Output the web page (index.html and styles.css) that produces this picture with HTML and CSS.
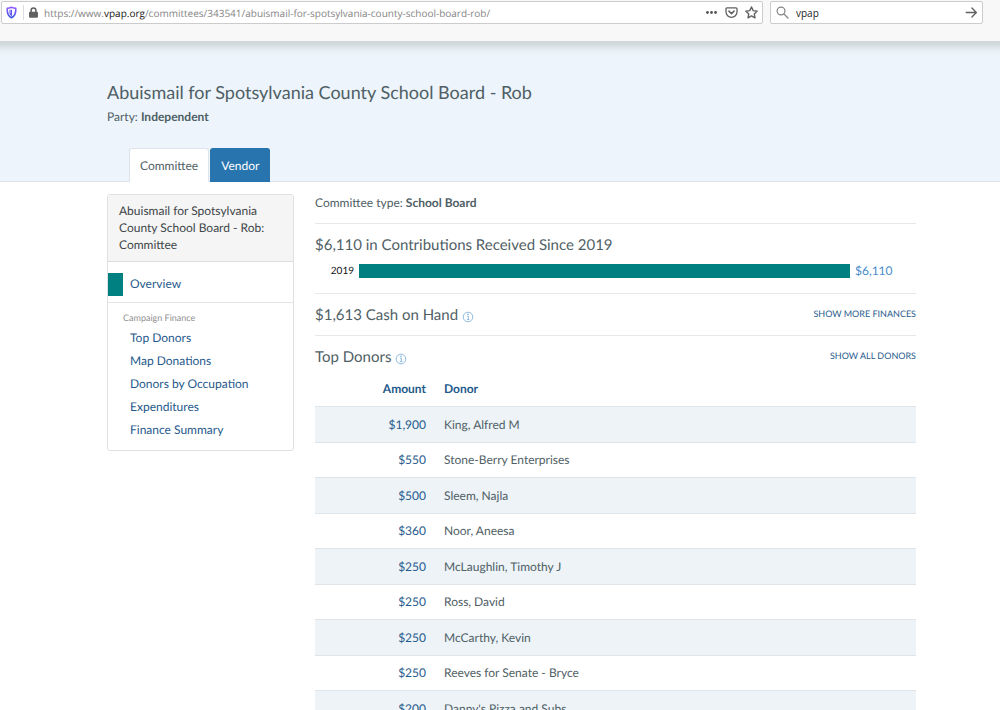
FILE: index.html
```html
<!DOCTYPE html>
<html lang="en">
<head>
<meta charset="utf-8">
<meta name="viewport" content="width=device-width, initial-scale=1">
<title>Abuismail for Spotsylvania County School Board - Rob</title>
<link rel="stylesheet" href="styles.css">
</head>
<body>
<div class="toolbar">
  <div class="field address">
    <svg class="icon shield" viewBox="0 0 16 16" aria-hidden="true"><defs><linearGradient id="shade" x1="0" y1="0" x2="0" y2="1"><stop offset="0" stop-color="#9059ff"/><stop offset="1" stop-color="#3a55e8"/></linearGradient></defs><path d="M8 1.500c2 .9 3.600 1.200 5.300 1.200.3 5.500-.9 9.500-5.300 11.800C3.600 12.200 2.400 8.200 2.700 2.700 4.400 2.700 6 2.400 8 1.500z" fill="none" stroke="url(#shade)" stroke-width="1.900" stroke-linejoin="round"/><path d="M6.200 4.500v4c0 1.500.7 2.300 1.800 3V4.500" fill="#fff" stroke="#6058f0" stroke-width="1.400"/></svg>
    <span class="divider"></span>
    <svg class="icon lock" viewBox="0 0 16 16" aria-hidden="true"><rect x="1.500" y="7" width="13" height="8.500" rx="1.200" fill="#606060"/><path d="M4.500 7.500V5a3.500 3.500 0 0 1 7 0v2.500" fill="none" stroke="#606060" stroke-width="2.200"/></svg>
    <span class="url">https://www.<b>vpap.org</b>/committees/343541/abuismail-for-spotsylvania-county-school-board-rob/</span>
    <button class="tool" aria-label="Page actions"><svg class="icon" viewBox="0 0 16 16"><g fill="#555"><circle cx="3" cy="8" r="1.700"/><circle cx="8" cy="8" r="1.700"/><circle cx="13" cy="8" r="1.700"/></g></svg></button>
    <button class="tool" aria-label="Save to Pocket"><svg class="icon" viewBox="0 0 16 16"><path d="M2.500 2.200h11a1.300 1.300 0 0 1 1.300 1.300v3.700a6.800 6.800 0 0 1-13.600 0V3.500a1.300 1.300 0 0 1 1.300-1.300z" fill="none" stroke="#606060" stroke-width="1.600"/><path d="M4.800 6.300 8 9.400l3.200-3.100" fill="none" stroke="#606060" stroke-width="1.800" stroke-linecap="round" stroke-linejoin="round"/></svg></button>
    <button class="tool" aria-label="Bookmark this page"><svg class="icon" viewBox="0 0 16 16"><path d="M8 1.200l2.100 4.500 4.900.6-3.600 3.400.9 4.900L8 12.200l-4.300 2.400.9-4.900L1 6.300l4.900-.6z" fill="none" stroke="#606060" stroke-width="1.700" stroke-linejoin="round"/></svg></button>
  </div>
  <div class="field search">
    <svg class="icon" viewBox="0 0 16 16" aria-hidden="true"><circle cx="6.200" cy="6.200" r="4.800" fill="none" stroke="#858585" stroke-width="1.500"/><path d="M9.700 9.700l5 5" stroke="#858585" stroke-width="1.700" stroke-linecap="round"/></svg>
    <input class="query" type="text" aria-label="Search" value="vpap">
    <button class="tool" aria-label="Go"><svg class="icon" viewBox="0 0 16 16"><path d="M1.500 8h12M8.500 2.500 14 8l-5.500 5.500" fill="none" stroke="#606060" stroke-width="1.600" stroke-linecap="round" stroke-linejoin="round"/></svg></button>
  </div>
</div>

<header class="masthead">
  <h1 class="title">Abuismail for Spotsylvania County School Board - Rob</h1>
  <p class="party">Party: <b>Independent</b></p>
  <nav class="tabs">
    <a class="tab current" href="#committee">Committee</a>
    <a class="tab" href="#vendor">Vendor</a>
  </nav>
</header>

<div class="content">
  <aside class="side">
    <h2 class="side-title">Abuismail for Spotsylvania County School Board - Rob: Committee</h2>
    <div class="overview"><span class="marker"></span><a href="#overview">Overview</a></div>
    <nav class="side-nav">
      <h3 class="side-label">Campaign Finance</h3>
      <a href="#top">Top Donors</a>
      <a href="#map">Map Donations</a>
      <a href="#occupation">Donors by Occupation</a>
      <a href="#expenditures">Expenditures</a>
      <a href="#summary">Finance Summary</a>
    </nav>
  </aside>

  <main class="main">
    <p class="kind">Committee type: <b>School Board</b></p>
    <section class="received">
      <h2 class="heading">$6,110 in Contributions Received Since 2019</h2>
      <div class="chart">
        <span class="year">2019</span>
        <span class="bar"></span>
        <a class="total" href="#2019">$6,110</a>
      </div>
    </section>
    <section class="summary">
      <h2 class="heading">$1,613 Cash on Hand <svg class="info" viewBox="0 0 12 12" aria-hidden="true"><circle cx="6" cy="6" r="4.800" fill="none" stroke="#8fb9e0"/><path d="M5 5.200h1.300v3.300M4.800 8.600h2.600" fill="none" stroke="#8fb9e0"/><circle cx="6" cy="3.400" r=".8" fill="#8fb9e0"/></svg></h2>
      <a class="more" href="#finances">SHOW MORE FINANCES</a>
    </section>
    <section class="summary">
      <h2 class="heading">Top Donors <svg class="info" viewBox="0 0 12 12" aria-hidden="true"><circle cx="6" cy="6" r="4.800" fill="none" stroke="#8fb9e0"/><path d="M5 5.200h1.300v3.300M4.800 8.600h2.600" fill="none" stroke="#8fb9e0"/><circle cx="6" cy="3.400" r=".8" fill="#8fb9e0"/></svg></h2>
      <a class="more" href="#donors">SHOW ALL DONORS</a>
    </section>
    <table class="donors">
      <thead><tr><th class="amount">Amount</th><th>Donor</th></tr></thead>
      <tbody>
        <tr><td class="amount"><a href="#d1">$1,900</a></td><td>King, Alfred M</td></tr>
        <tr><td class="amount"><a href="#d2">$550</a></td><td>Stone-Berry Enterprises</td></tr>
        <tr><td class="amount"><a href="#d3">$500</a></td><td>Sleem, Najla</td></tr>
        <tr><td class="amount"><a href="#d4">$360</a></td><td>Noor, Aneesa</td></tr>
        <tr><td class="amount"><a href="#d5">$250</a></td><td>McLaughlin, Timothy J</td></tr>
        <tr><td class="amount"><a href="#d6">$250</a></td><td>Ross, David</td></tr>
        <tr><td class="amount"><a href="#d7">$250</a></td><td>McCarthy, Kevin</td></tr>
        <tr><td class="amount"><a href="#d8">$250</a></td><td>Reeves for Senate - Bryce</td></tr>
        <tr><td class="amount"><a href="#d9">$200</a></td><td>Danny's Pizza and Subs</td></tr>
      </tbody>
    </table>
  </main>
</div>
</body>
</html>
```
FILE: styles.css
```css
* { box-sizing: border-box; }
html { overflow: hidden; }
body {
  margin: 0;
  height: 100vh;
  overflow: hidden;
  background: #fff;
  color: #4f6065;
  font: 12px/18px Lato, sans-serif;
  text-rendering: geometricPrecision;
}
h1, h2, h3, p { margin: 0; font-weight: 400; }
a { color: #1f5a8c; text-decoration: none; }
button { border: 0; padding: 0; background: none; display: flex; }

.toolbar {
  display: flex;
  gap: 7px;
  padding: 1px 17px 17px 1px;
  background: #f8f8f8;
  font: 10px/20px "Open Sans", sans-serif;
}
.field {
  display: flex;
  align-items: center;
  height: 23px;
  border: 1px solid #ccc;
  border-radius: 2px;
  background: #fff;
}
.address { flex: 1; min-width: 0; padding: 0 4px 0 3px; gap: 7px; }
.search { width: 213px; padding: 0 4px 0 5px; gap: 7px; }
.icon { width: 13px; height: 13px; display: block; flex: none; }
.divider { width: 1px; height: 15px; margin: 0 -3px 0 -2px; background: #ddd; }
.lock { width: 11px; height: 11px; }
.url { flex: 1; min-width: 0; margin-left: -2px; overflow: hidden; white-space: nowrap; color: #858585; }
.url b { font-weight: 400; color: #111; }
.query { flex: 1; min-width: 0; border: 0; padding: 0; background: none; color: #222; font: inherit; outline: 0; }

.masthead {
  padding: 40px 85px 0 107px;
  border-bottom: 1px solid #dde3e8;
  background: linear-gradient(#d0d7db, #d3dade 3px, #e4ebf1 8px, #edf4fb 14px);
}
.title { font-size: 18px; line-height: 22px; }
.party { margin-top: 5px; }
.tabs { display: flex; gap: 1px; margin: 22px 0 -1px 22px; }
.tab {
  padding: 8px 10px 7px;
  border: 1px solid #2874ae;
  border-bottom: 0;
  border-radius: 3px 3px 0 0;
  background: #2874ae;
  color: #fff;
}
.tab.current { border-color: #dde3e8; background: #fff; color: #4f6065; }

.content { display: flex; align-items: flex-start; gap: 21px; padding: 12px 84px 0 107px; }
.side { width: 187px; flex: none; border: 1px solid #e0e0e0; border-radius: 3px; }
.side-title { padding: 7px 11px 8px; border-bottom: 1px solid #ddd; background: #f5f5f5; color: #404648; font-size: 12px; line-height: 17px; }
.overview { display: flex; align-items: center; gap: 7px; height: 41px; padding-top: 4px; border-bottom: 1px solid #e4e4e4; }
.marker { width: 15px; height: 23px; background: #008080; }
.side-nav { display: flex; flex-direction: column; padding: 6px 22px 9px; line-height: 23px; }
.side-label { margin-left: -7px; color: #909090; font-size: 9px; line-height: 17px; }

.main { flex: 1; min-width: 0; }
.kind { padding-bottom: 11px; border-bottom: 1px solid #e8e8e8; }
.heading { font-size: 15px; line-height: 20px; }
.received { padding: 11px 0 13px; border-bottom: 1px solid #e8e8e8; }
.chart { display: flex; align-items: center; gap: 5px; margin-top: 7px; }
.year { width: 39px; text-align: right; color: #111; font-size: 10px; }
.bar { flex: 0 1 491px; height: 14px; background: #008080; }
.total { color: #4a8cca; }
.summary { display: flex; justify-content: space-between; padding: 11px 0 10px; border-bottom: 1px solid #e8e8e8; }
.summary:last-of-type { border: 0; }
.info { width: 12px; height: 12px; vertical-align: -3px; }
.more { font-size: 9px; line-height: 18px; }
.donors { width: 100%; border-collapse: separate; border-spacing: 0; table-layout: fixed; }
.donors th { height: 29px; padding: 3px 9px 0; color: #1f5a8c; text-align: left; font-weight: 700; vertical-align: top; }
.donors td { height: 36px; padding: 0 9px; border-top: 1px solid #dfe4e8; }
.donors .amount { width: 120px; text-align: right; }
.donors tbody tr:nth-child(odd) { background: #edf3f7; }
.donors tbody tr:nth-child(even) td { height: 35px; }
```
